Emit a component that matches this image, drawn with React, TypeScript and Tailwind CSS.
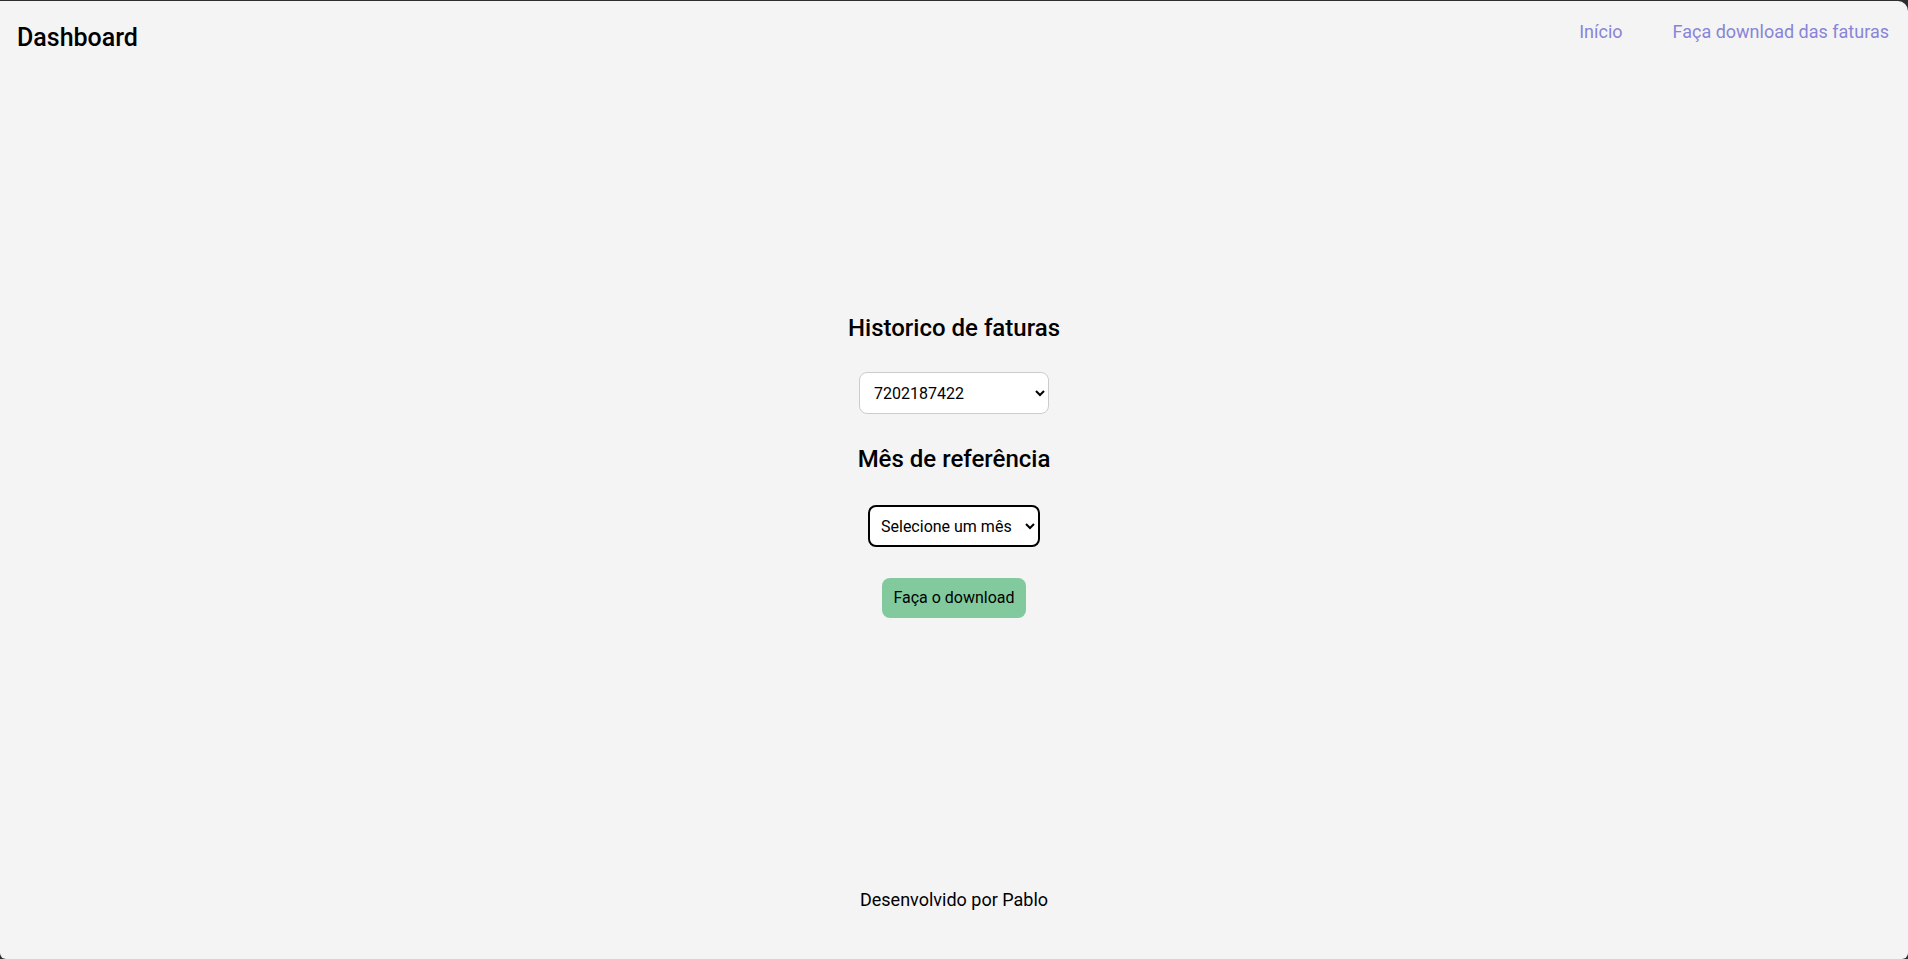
import React from "react";

export default function App() {
  return (
    <div className="h-[959px] bg-[#2e2e2e] pt-px" style={{ fontFamily: "Roboto, 'Noto Sans', sans-serif" }}>
      <div className="flex h-[958px] flex-col rounded-tr-[10px] rounded-b-[6px] bg-[#f4f4f4] text-black">
        <header className="flex items-start justify-between pl-[17px] pr-[19px]">
          <h1 className="mt-[24px] text-[25px] font-medium leading-none">Dashboard</h1>
          <nav className="mt-[22px] flex gap-[50px] text-[18px] leading-none text-[#8884d8]">
            <a href="#">Início</a>
            <a href="#">Faça download das faturas</a>
          </nav>
        </header>
        <main className="flex flex-col items-center">
          <h2 className="mt-[266px] text-[24px] font-medium leading-none">Historico de faturas</h2>
          <select
            defaultValue="7202187422"
            className="mt-[32px] h-[42px] w-[190px] rounded-lg border border-[#cccccc] bg-white pl-[10px] pr-[8px] text-[16px] text-black"
          >
            <option value="7202187422">7202187422</option>
          </select>
          <h2 className="mt-[33px] text-[24px] font-medium leading-none">Mês de referência</h2>
          <select
            defaultValue=""
            className="mt-[34px] h-[42px] w-[172px] rounded-lg border-2 border-black bg-white pl-[7px] pr-[6px] text-[16px] text-black"
          >
            <option value="">Selecione um mês</option>
          </select>
          <button className="mt-[31px] h-[40px] w-[144px] rounded-lg bg-[#82ca9d] text-[16px] text-black">
            Faça o download
          </button>
        </main>
        <footer className="mt-[273px] text-center text-[18px] leading-none">Desenvolvido por Pablo</footer>
      </div>
    </div>
  );
}
